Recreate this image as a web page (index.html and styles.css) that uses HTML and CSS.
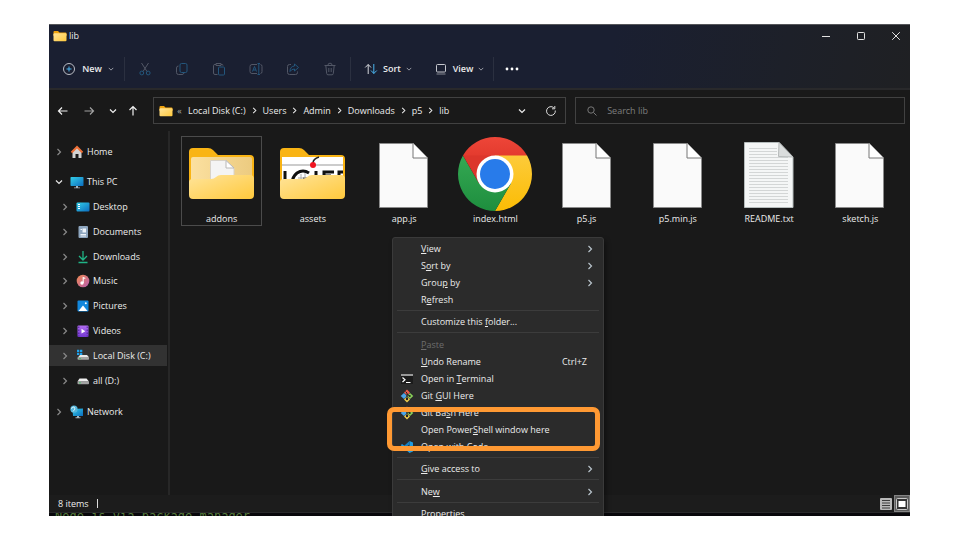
FILE: index.html
```html
<!DOCTYPE html>
<html lang="en">
<head>
<meta charset="utf-8">
<title>lib</title>
<link rel="stylesheet" href="styles.css">
</head>
<body>
<svg class="defs" aria-hidden="true">
  <defs>
    <linearGradient id="gold" x1="0" y1="0" x2="1" y2="1"><stop offset="0" stop-color="#ffe49a"/><stop offset="1" stop-color="#ffc93c"/></linearGradient>
    <linearGradient id="cream" x1="0" y1="0" x2="1" y2="0"><stop offset="0" stop-color="#fbe0a0"/><stop offset="1" stop-color="#eccb80"/></linearGradient>
    <linearGradient id="blue" x1="0" y1="0" x2="1" y2="1"><stop offset="0" stop-color="#33cfe8"/><stop offset="1" stop-color="#0c6cbf"/></linearGradient>
    <linearGradient id="red" x1="0" y1="0" x2="0" y2="1"><stop offset="0" stop-color="#ee4638"/><stop offset="1" stop-color="#d93025"/></linearGradient>
    <linearGradient id="green" x1="0" y1="0" x2="0" y2="1"><stop offset="0" stop-color="#34a853"/><stop offset="1" stop-color="#1e8e3e"/></linearGradient>
    <linearGradient id="yellow" x1="0" y1="0" x2="0" y2="1"><stop offset="0" stop-color="#fdcb3a"/><stop offset="1" stop-color="#fbbc04"/></linearGradient>
    <linearGradient id="note" x1="0" y1="0" x2="1" y2="1"><stop offset="0" stop-color="#f28b50"/><stop offset="1" stop-color="#b65cb0"/></linearGradient>
    <linearGradient id="film" x1="0" y1="0" x2="0" y2="1"><stop offset="0" stop-color="#b06cf0"/><stop offset="1" stop-color="#7438d0"/></linearGradient>
  </defs>
  <symbol id="right" viewBox="0 0 8 8"><path d="M2.5 1 5.5 4 2.5 7" fill="none" stroke="currentColor" stroke-width="1.2"/></symbol>
  <symbol id="down" viewBox="0 0 8 8"><path d="M1 2.5 4 5.5 7 2.5" fill="none" stroke="currentColor" stroke-width="1.2"/></symbol>
  <symbol id="folder-sm" viewBox="0 0 14 12"><path d="M.5 2Q.5 1 1.500 1H5L6.500 2.500H12.500Q13.500 2.500 13.500 3.500V6H.5Z" fill="#f0a410"/><rect x=".5" y="3.300" width="13" height="8" rx="1" fill="url(#gold)"/></symbol>
  <symbol id="page" viewBox="0 0 50 66"><path d="M.5.5H34.500L48.500 15V64.500H.5Z" fill="#fafafa" stroke="#8b8b8b"/><path d="M34 .5V15H48.500" fill="#fff" stroke="#777"/></symbol>
  <symbol id="git" viewBox="0 0 14 14"><path d="M7 .5 10 3.500 7 6.500 4 3.500Z" fill="#ed5a4a"/><path d="M10 4 13.300 7 10 10 7 7Z" fill="#8ad05a"/><path d="M4 4 7 7 4 10 .7 7Z" fill="#4aa5e8"/><path d="M7 7.500 10 10.500 7 13.500 4 10.500Z" fill="#f1ce4c"/><path d="M5.500 2.500 7 4V10M7 5 9.500 7" fill="none" stroke="#222" stroke-width="1"/><circle cx="7" cy="10" r="1.200" fill="#222"/><circle cx="9.700" cy="7" r="1.100" fill="#222"/></symbol>
</svg>

<main class="stage">
<div class="window">
  <header class="header">
    <div class="titlebar">
      <svg class="i14"><use href="#folder-sm"/></svg>
      <h1>lib</h1>
      <div class="controls">
        <button aria-label="Minimize"><svg viewBox="0 0 10 10"><path d="M1 5.500H9"/></svg></button>
        <button aria-label="Maximize"><svg viewBox="0 0 10 10"><rect x="1.500" y="1.500" width="7" height="7" rx=".8"/></svg></button>
        <button aria-label="Close"><svg viewBox="0 0 10 10"><path d="M1.200 1.200 8.800 8.800M8.800 1.200 1.200 8.800"/></svg></button>
      </div>
    </div>
    <div class="toolbar">
      <button class="cmd cmd-new"><svg class="i14" viewBox="0 0 14 14"><circle cx="7" cy="7" r="5.500" stroke="#b9bcc4"/><path d="M7 4.500V9.500M4.500 7H9.500" stroke="#4ab4ee"/></svg><span>New</span><svg class="chev"><use href="#down"/></svg></button>
      <div class="tools">
        <button aria-label="Cut"><svg viewBox="0 0 14 14"><path d="M3.500 1 9 9.500M10.500 1 5 9.500"/><g class="tint"><circle cx="3.800" cy="11" r="1.900"/><circle cx="10.200" cy="11" r="1.900"/></g></svg></button>
        <button aria-label="Copy"><svg viewBox="0 0 14 14"><path d="M3.500 4Q1.500 4 1.500 6V10.500Q1.500 12.500 3.500 12.500H7Q8.500 12.500 9 11"/><rect class="tint" x="5" y="1.500" width="7" height="9" rx="1.500"/></svg></button>
        <button aria-label="Paste"><svg viewBox="0 0 14 14"><path d="M5.500 12.500H3Q1.500 12.500 1.500 11V3.500Q1.500 2.500 3 2.500H4M9 2.500H10Q11 2.500 11 3.500M4 1.500H9V3.500H4Z"/><rect class="tint" x="6.500" y="5" width="6" height="8" rx="1"/></svg></button>
        <button aria-label="Rename"><svg viewBox="0 0 14 14"><path d="M8 2.500H3Q1 2.500 1 4.500V9.500Q1 11.500 3 11.500H8M11.500 2.500Q13 2.500 13 4.500V9.500Q13 11.500 11.500 11.500"/><path class="tint" d="M3.500 9.500 5.500 4.500 7.500 9.500M4.200 8H6.800M9.800 1.500V12.500M8.500 1.500H11M8.500 12.500H11"/></svg></button>
        <button aria-label="Share"><svg viewBox="0 0 14 14"><path d="M5 2.500H3.500Q1.500 2.500 1.500 4.500V10.500Q1.500 12.500 3.500 12.500H9.500Q11.500 12.500 11.500 10.500V9.500"/><path class="tint" d="M8.500 2 12.500 5.500 8.500 9V7Q5.500 7 4 9.500 4 4.500 8.500 4Z"/></svg></button>
        <button aria-label="Delete"><svg viewBox="0 0 14 14"><path d="M1.500 3.500H12.500M5 3Q5 1.200 7 1.200T9 3M2.800 3.500 3.700 11.500Q3.800 12.800 5 12.800H9Q10.200 12.800 10.300 11.500L11.200 3.500M5.800 6V10M8.200 6V10"/></svg></button>
      </div>
      <button class="cmd"><svg class="i14" viewBox="0 0 14 14"><path d="M4.200 12V2.500M1.200 5.500 4.200 2.500 7 5.500" stroke="#d5d7dc"/><path d="M9.800 2V11.500M7 8.500 9.800 11.500 12.800 8.500" stroke="#4ab4ee"/></svg><span>Sort</span><svg class="chev"><use href="#down"/></svg></button>
      <button class="cmd cmd-view"><svg class="i14" viewBox="0 0 14 14"><rect x="2.500" y="2.500" width="9" height="7.500" rx="1" stroke="#c5c7cd"/><path d="M2.500 12H11.500" stroke="#858993"/></svg><span>View</span><svg class="chev"><use href="#down"/></svg></button>
      <button class="more" aria-label="See more"><svg class="i14" viewBox="0 0 14 14"><g fill="#fff"><circle cx="2" cy="7" r="1.400"/><circle cx="7" cy="7" r="1.400"/><circle cx="12" cy="7" r="1.400"/></g></svg></button>
    </div>
  </header>

  <nav class="location" aria-label="Location">
    <div class="history">
      <button aria-label="Back"><svg viewBox="0 0 12 12"><path d="M10.500 6H1.500M5 2.500 1.500 6 5 9.500"/></svg></button>
      <button class="dim" aria-label="Forward"><svg viewBox="0 0 12 12"><path d="M1.500 6H10.500M7 2.500 10.500 6 7 9.500"/></svg></button>
      <button class="recent" aria-label="Recent"><svg viewBox="0 0 12 12"><path d="M3 4.500 6 7.500 9 4.500"/></svg></button>
      <button class="up" aria-label="Up"><svg viewBox="0 0 12 12"><path d="M6 10.500V1.500M2.500 5 6 1.500 9.500 5"/></svg></button>
    </div>
    <div class="address">
      <svg class="i14"><use href="#folder-sm"/></svg>
      <span class="more-path">«</span>
      <ol class="crumbs">
        <li><a href="#c">Local Disk (C:)</a><svg class="chev"><use href="#right"/></svg></li>
        <li><a href="#users">Users</a><svg class="chev"><use href="#right"/></svg></li>
        <li><a href="#admin">Admin</a><svg class="chev"><use href="#right"/></svg></li>
        <li><a href="#downloads">Downloads</a><svg class="chev"><use href="#right"/></svg></li>
        <li><a href="#p5">p5</a><svg class="chev"><use href="#right"/></svg></li>
        <li><a href="#lib">lib</a></li>
      </ol>
      <button aria-label="Previous locations"><svg class="chev"><use href="#down"/></svg></button>
      <button aria-label="Refresh"><svg class="refresh" viewBox="0 0 12 12"><path d="M10.300 5.500A4.400 4.400 0 1 1 8.800 2.700M9.800 1V3.800H7"/></svg></button>
    </div>
    <label class="search">
      <svg viewBox="0 0 12 12"><circle cx="5" cy="5" r="3.200"/><path d="M7.500 7.500 10.500 10.500"/></svg>
      <input type="search" placeholder="Search lib" aria-label="Search lib">
    </label>
  </nav>

  <div class="body">
    <nav class="tree" aria-label="Folders">
      <a class="node" href="#home"><svg class="chev"><use href="#right"/></svg><svg class="i14" viewBox="0 0 14 14"><path d="M2.500 6V12.500Q2.500 13 3 13H5.500V9H8.500V13H11Q11.500 13 11.500 12.500V6L7 2Z" fill="#d2d2d2"/><path d="M1.500 7.500 7 2 12.500 7.500" fill="none" stroke="#ee7038" stroke-width="2"/></svg>Home</a>
      <div class="drives">
        <a class="node open" href="#pc"><svg class="chev"><use href="#down"/></svg><svg class="i14" viewBox="0 0 14 14"><rect x=".5" y="2" width="13" height="9" rx=".8" fill="url(#blue)"/><path d="M6 11H8V12.500H10V13.300H4V12.500H6Z" fill="#a7b4bd"/></svg>This PC</a>
        <a class="node sub" href="#desktop"><svg class="chev"><use href="#right"/></svg><svg class="i14" viewBox="0 0 14 14"><rect x=".5" y="2.500" width="13" height="9" rx="1" fill="url(#blue)"/><path d="M2 4.500H4M2 6.500H4M2 8.500H4" stroke="#fff"/></svg>Desktop</a>
        <a class="node sub" href="#documents"><svg class="chev"><use href="#right"/></svg><svg class="i14" viewBox="0 0 14 14"><rect x="2.500" y="1" width="9.500" height="12" rx="1" fill="#8ea6bf"/><path d="M4.500 9.500H10M4.500 11H10M4.500 4.500H6" stroke="#eef4fa"/><path d="M6.500 3.500H10V7.500H6.500Z" fill="#eef4fa"/></svg>Documents</a>
        <a class="node sub" href="#downloads"><svg class="chev"><use href="#right"/></svg><svg class="i14" viewBox="0 0 14 14"><path d="M7 1V10M3 6 7 10 11 6M2.500 12.500H11.500" fill="none" stroke="#20b486" stroke-width="1.300"/></svg>Downloads</a>
        <a class="node sub" href="#music"><svg class="chev"><use href="#right"/></svg><svg class="i14" viewBox="0 0 14 14"><circle cx="7" cy="7" r="6.300" fill="url(#note)"/><circle cx="6" cy="9" r="1.700" fill="#fff"/><path d="M7.200 9V3.500L9.300 4.500" fill="none" stroke="#fff" stroke-width="1.100"/></svg>Music</a>
        <a class="node sub" href="#pictures"><svg class="chev"><use href="#right"/></svg><svg class="i14" viewBox="0 0 14 14"><rect x="1.500" y="1.500" width="11" height="11" rx="1" fill="#1287dc"/><path d="M2.500 12 7 6.500 11.500 12Z" fill="#fff"/><circle cx="9.800" cy="4.200" r="1" fill="#fff"/></svg>Pictures</a>
        <a class="node sub" href="#videos"><svg class="chev"><use href="#right"/></svg><svg class="i14" viewBox="0 0 14 14"><rect x="1.500" y="1.500" width="11" height="11.500" rx="1" fill="url(#film)"/><path d="M2.800 2.500V12.500M11.200 2.500V12.500" stroke="#4b2094" stroke-dasharray="1.500 1.500"/><path d="M5.500 4.800 9.300 7.200 5.500 9.600Z" fill="#fff"/></svg>Videos</a>
        <a class="node sub selected" href="#c"><svg class="chev"><use href="#right"/></svg><svg class="i14" viewBox="0 0 14 14"><path d="M1 .8H3.300V3H1ZM4 .8H6.300V3H4ZM1 3.700H3.300V6H1ZM4 3.700H6.300V6H4Z" fill="#1fa2ec"/><path d="M4 6H11L13 8.300H2Z" fill="#e8e8e8"/><rect x="1.500" y="8" width="11.500" height="2.800" rx=".8" fill="#a3a3a3"/><path d="M3 9.500H5" stroke="#46c36c"/></svg>Local Disk (C:)</a>
        <a class="node sub" href="#d"><svg class="chev"><use href="#right"/></svg><svg class="i14" viewBox="0 0 14 14"><path d="M3.500 4.500H10.500L13 7.500H1.500Z" fill="#f0f0f0"/><rect x="1.500" y="7.300" width="11.500" height="3" rx=".8" fill="#a3a3a3"/><path d="M3 8.800H5" stroke="#46c36c"/></svg>all (D:)</a>
      </div>
      <a class="node" href="#network"><svg class="chev"><use href="#right"/></svg><svg class="i14" viewBox="0 0 14 14"><path d="M2.500 4 13 3.500V11H3Z" fill="url(#blue)"/><circle cx="4" cy="4.200" r="3.600" fill="#55b6dc"/><path d="M1 3.500 4 1.800 5 4 3 6.500" fill="none" stroke="#d5f2f8"/><path d="M7 11H9V12.300H10.500V13.300H5.500V12.300H7Z" fill="#a7b4bd"/></svg>Network</a>
    </nav>

    <section class="files" aria-label="Files">
      <figure class="file selected"><svg viewBox="0 0 74 74"><path d="M4 15Q4 11 8 11H23Q26 11 28 13L33 18H65Q69 18 69 22V45H4Z" fill="#f9b414"/><rect x="6" y="20" width="61" height="30" rx="2" fill="url(#cream)"/><path d="M25.500 50V23.500H41L49 31V50Z" fill="#f4f4f4" stroke="#d8d2c8"/><path d="M41 23.500V31H49Z" fill="#fff" stroke="#b8b8b8"/><path d="M4 45Q4 42 8 42H26Q29 42 31 40T36 38H65Q69 38 69 42V58Q69 62 65 62H8Q4 62 4 58Z" fill="url(#gold)"/></svg><figcaption>addons</figcaption></figure>
      <figure class="file"><svg viewBox="0 0 74 74"><path d="M4 15Q4 11 8 11H23Q26 11 28 13L33 18H65Q69 18 69 22V45H4Z" fill="#f9b414"/><rect x="6" y="20" width="61" height="30" fill="#fff"/><path d="M6 28H67" stroke="#999"/><path d="M9 34V46M33 36Q27 32 21 36 16 40 16 47M27 42H34M40 34V43M48 43V35H58M48 39H55M63 43V35H67" fill="none" stroke="#111" stroke-width="3"/><path d="M22 41H34M25 37V44M29 36V42" stroke="#aaa"/><path d="M37 26Q37 22 43 20" fill="none" stroke="#222" stroke-width="1.500"/><circle cx="37" cy="28" r="3" fill="#f01420"/><path d="M4 45Q4 42 8 42H26Q29 42 31 40T36 38H65Q69 38 69 42V58Q69 62 65 62H8Q4 62 4 58Z" fill="url(#gold)"/></svg><figcaption>assets</figcaption></figure>
      <figure class="file"><svg viewBox="0 0 74 74"><use href="#page" x="12" y="6" width="50" height="66"/></svg><figcaption>app.js</figcaption></figure>
      <figure class="file"><svg viewBox="0 0 74 74"><path d="M37 37 4.960 18.500A37 37 0 0 1 69.040 18.500Z" fill="url(#red)"/><path d="M37 37 37 18.500H69.040A37 37 0 0 1 37 74L53 46.200Z" fill="url(#yellow)"/><path d="M4.960 18.500A37 37 0 0 0 37 74L53 46.200 37 37 21 46.200Z" fill="url(#green)"/><path d="M4.960 18.500 21 46.200 37 37V18.500Z" fill="#dc362b"/><circle cx="37" cy="37" r="18.500" fill="#fff"/><circle cx="37" cy="37" r="15" fill="#287bea"/></svg><figcaption>index.html</figcaption></figure>
      <figure class="file"><svg viewBox="0 0 74 74"><use href="#page" x="12" y="6" width="50" height="66"/></svg><figcaption>p5.js</figcaption></figure>
      <figure class="file"><svg viewBox="0 0 74 74"><use href="#page" x="12" y="6" width="50" height="66"/></svg><figcaption>p5.min.js</figcaption></figure>
      <figure class="file"><svg viewBox="0 0 74 74"><path d="M12.500 5.500H47L61 20V70.500H12.500Z" fill="#f4f6f6" stroke="#b5bcbc"/><path d="M17 11.500H45M17 14.500H45M17 17.500H45M17 20.500H56M17 23.500H56M17 26.500H56M17 29.500H56M17 32.500H56M17 35.500H56M17 38.500H56M17 41.500H56M17 44.500H56M17 47.500H56M17 50.500H56M17 53.500H56M17 56.500H56M17 59.500H56M17 62.500H56M17 65.500H56" stroke="#d3d6d6"/><path d="M47 5.500 46.500 19.500 61 20Z" fill="#dadddd" stroke="#b5b9b9"/></svg><figcaption>README.txt</figcaption></figure>
      <figure class="file"><svg viewBox="0 0 74 74"><use href="#page" x="12" y="6" width="50" height="66"/></svg><figcaption>sketch.js</figcaption></figure>
    </section>
  </div>

  <footer class="status">
    <span class="count">8 items</span>
    <div class="views">
      <button aria-label="Details"><svg viewBox="0 0 12 12"><rect width="12" height="12" rx="1" fill="#b9b9b9"/><path d="M2 2.500H10M2 5H10M2 7.500H10M2 10H10" stroke="#3c3c3c"/></svg></button>
      <button class="active" aria-label="Large icons"><svg viewBox="0 0 12 12"><rect x=".5" y=".5" width="11" height="11" rx="1" fill="#333" stroke="#c8c8c8"/><rect x="2.500" y="3" width="7" height="6" fill="#fff"/></svg></button>
    </div>
  </footer>
  <div class="behind">Node.js via package manager</div>

  <div class="menu" role="menu">
    <div class="group">
      <button role="menuitem"><span><u>V</u>iew</span><svg class="chev"><use href="#right"/></svg></button>
      <button role="menuitem"><span>S<u>o</u>rt by</span><svg class="chev"><use href="#right"/></svg></button>
      <button role="menuitem"><span>Grou<u>p</u> by</span><svg class="chev"><use href="#right"/></svg></button>
      <button role="menuitem"><span>R<u>e</u>fresh</span></button>
    </div>
    <div class="group">
      <button role="menuitem"><span>Customize this <u>f</u>older...</span></button>
    </div>
    <div class="group roomy">
      <button role="menuitem" disabled><span><u>P</u>aste</span></button>
      <button role="menuitem"><span><u>U</u>ndo Rename</span><kbd>Ctrl+Z</kbd></button>
      <button role="menuitem"><svg class="lead" viewBox="0 0 14 14"><rect x="1" y="2" width="12" height="10" fill="#1b1b1b"/><path d="M1 3H13" stroke="#999" stroke-width="2"/><path d="M2.500 5.500 5 7.800 2.500 10M6 10.500H10.500" fill="none" stroke="#fff" stroke-width="1.200"/></svg><span>Open in <u>T</u>erminal</span></button>
      <button role="menuitem"><svg class="lead"><use href="#git"/></svg><span>Git <u>G</u>UI Here</span></button>
      <button role="menuitem"><svg class="lead"><use href="#git"/></svg><span>Git Ba<u>s</u>h Here</span></button>
      <button role="menuitem"><span>Open Power<u>S</u>hell window here</span></button>
      <button role="menuitem"><svg class="lead" viewBox="0 0 14 14"><path d="M9.500 1 13 2.500V11.500L9.500 13 .8 5.300 2 4 9.500 9.500Z" fill="#209ce0"/><path d="M9.500 1V4.500L2 10 .8 8.800Z" fill="#1681c4"/></svg><span>Open with Code</span></button>
    </div>
    <div class="group">
      <button role="menuitem"><span><u>G</u>ive access to</span><svg class="chev"><use href="#right"/></svg></button>
    </div>
    <div class="group roomy">
      <button role="menuitem"><span>Ne<u>w</u></span><svg class="chev"><use href="#right"/></svg></button>
    </div>
    <div class="group">
      <button role="menuitem"><span>P<u>r</u>operties</span></button>
    </div>
  </div>
</div>
<div class="highlight"></div>
</main>
</body>
</html>
```
FILE: styles.css
```css
* { box-sizing: border-box; }
body {
  margin: 0;
  background: #fff;
  color: #ececec;
  font: 500 9px/16px "Open Sans", "Noto Sans", sans-serif;
}
button, input {
  margin: 0;
  padding: 0;
  border: 0;
  background: none;
  color: inherit;
  font: inherit;
}
button { display: flex; align-items: center; justify-content: center; }
a { color: inherit; text-decoration: none; }
svg { flex: none; fill: none; stroke-width: 1; }
.defs { position: absolute; width: 0; height: 0; }
.i14 { width: 14px; height: 14px; }
.chev { width: 8px; height: 8px; }

.stage {
  position: relative;
  height: 100vh;
  padding: 24px 50px 24px 49px;
}
.window {
  position: relative;
  display: flex;
  flex-direction: column;
  height: 100%;
  overflow: hidden;
  background: #191919;
  border-top: 1px solid #55565a;
}

/* Title bar and commands */
.header {
  background: linear-gradient(100deg, #1a1f31 65%, #1d2029 85%, #1f2023);
  border-bottom: 2px solid #29292b;
}
.titlebar { display: flex; align-items: center; height: 21px; padding-left: 4px; }
.titlebar h1 { margin: 0 0 0 2px; font: inherit; }
.controls { display: flex; gap: 7px; margin-left: auto; }
.controls button { width: 28px; height: 20px; }
.controls svg { width: 10px; height: 10px; stroke: #e2e2e2; }
.toolbar { display: flex; align-items: center; height: 42px; padding-top: 3px; font-weight: 600; }
.cmd { width: 71px; height: 24px; gap: 5px; padding-left: 3px; }
.cmd .chev { width: 6px; height: 6px; color: #a5a8b0; }
.cmd-new { width: 76px; gap: 6px; border-right: 1px solid #2b3040; }
.cmd-view { width: 72px; border-right: 1px solid #2b3040; }
.tools { display: flex; border-right: 1px solid #2b3040; padding: 0 2px 0 1px; }
.tools button { width: 37px; height: 24px; }
.tools svg { width: 14px; height: 14px; stroke: #525766; }
.tools .tint { stroke: #23567c; }
.more { width: 36px; height: 24px; }

/* Location row */
.location { display: flex; gap: 9px; padding: 7px 5px 7px 0; }
.history { display: flex; width: 95px; padding-left: 1px; }
.history button { width: 27px; }
.history .recent { width: 21px; }
.history .up { width: 22px; }
.history svg { width: 12px; height: 12px; stroke: #f0f0f0; stroke-width: 1.2; }
.history .dim svg { stroke: #a2a2a2; }
.address, .search {
  display: flex;
  align-items: center;
  height: 27px;
  border: 1px solid #414141;
}
.address { flex: 23; padding-left: 5px; }
.more-path { width: 15px; text-align: center; color: #aaa; }
.address .i14 { margin-right: -1px; }
.crumbs { display: flex; flex: 1; margin: 0; padding: 0 0 0 1px; list-style: none; }
.crumbs li { display: flex; align-items: center; }
.crumbs .chev { width: 7px; height: 7px; margin: 0 5px; }
.address button { width: 29px; height: 24px; }
.refresh { width: 12px; height: 12px; stroke: #dcdcdc; }
.search { flex: 18; padding-left: 10px; gap: 9px; }
.search svg { width: 12px; height: 12px; stroke: #777; }
.search input { flex: 1; min-width: 0; outline: 0; }
.search input::placeholder { color: #7d7d7d; opacity: 1; }

/* Folder tree and file grid */
.body { display: flex; flex: 1; min-height: 0; }
.tree { width: 121px; padding-top: 10px; border-right: 2px solid #272727; }
.node {
  display: flex;
  align-items: center;
  gap: 3px;
  height: 21px;
  margin-right: 1px;
  padding-left: 6px;
}
.node .chev { margin-right: 4px; color: #8a8a8a; }
.node.open .chev { color: #e6e6e6; }
.node.sub { padding-left: 12px; }
.node.selected { background: #323232; }
.drives {
  display: grid;
  grid-auto-rows: 1fr;
  align-items: center;
  height: 223px;
  margin: 8px 0;
}
.files {
  display: grid;
  flex: 1;
  grid-template-columns: repeat(8, 1fr);
  align-content: start;
  padding: 5px 4px 0 6px;
}
.file {
  height: 90px;
  margin: 0 5px;
  border: 1px solid transparent;
  text-align: center;
}
.file.selected { border-color: #4b4b4b; }
.file svg { display: block; width: 74px; height: 74px; margin: 0 auto; }

/* Status bar */
.status {
  display: flex;
  align-items: center;
  height: 17px;
  padding-left: 9px;
  background: #1c1c1c;
}
.count { padding-right: 8px; border-right: 1px solid #ddd; line-height: 9px; }
.views { display: flex; align-items: center; margin-left: auto; gap: 2px; }
.views button { height: 17px; }
.views svg { width: 12px; height: 12px; }
.views .active { width: 16px; background: #5c5c5c; border: 1px solid #848484; }
.behind {
  height: 4px;
  padding-left: 6px;
  overflow: hidden;
  background: #08070b;
  border-top: 1px solid #29292b;
  color: #557a3c;
  font: 12px/6px "DejaVu Sans Mono", monospace;
}

/* Context menu */
.menu {
  position: absolute;
  top: 212px;
  left: 343px;
  width: 212px;
  padding: 2px 4px;
  background: #2b2b2b;
  border: 1px solid #3a3a3a;
  border-radius: 3px;
  box-shadow: 2px 3px 5px rgba(0, 0, 0, .4);
}
.group { padding-bottom: 2px; }
.group + .group { padding-top: 2px; border-top: 1px solid #3c3c3c; }
.group + .roomy { padding-top: 3px; }
.menu button {
  display: grid;
  grid-template-columns: 20px 1fr auto;
  gap: 4px;
  width: 100%;
  height: 17px;
  padding-right: 5px;
  text-align: left;
}
.menu button:disabled { color: #6d6d6d; }
.menu span { grid-column: 2; }
.menu u { text-underline-offset: 1px; }
.lead { grid-column: 1; grid-row: 1; width: 14px; height: 14px; margin-left: 3px; }
.menu kbd { margin-right: 7px; font: inherit; }
.menu .chev { color: #b9c4cc; }

.highlight {
  position: absolute;
  top: 407px;
  left: 387px;
  width: 213px;
  height: 44px;
  border: 5px solid #ff9933;
  border-radius: 7px;
}
```
